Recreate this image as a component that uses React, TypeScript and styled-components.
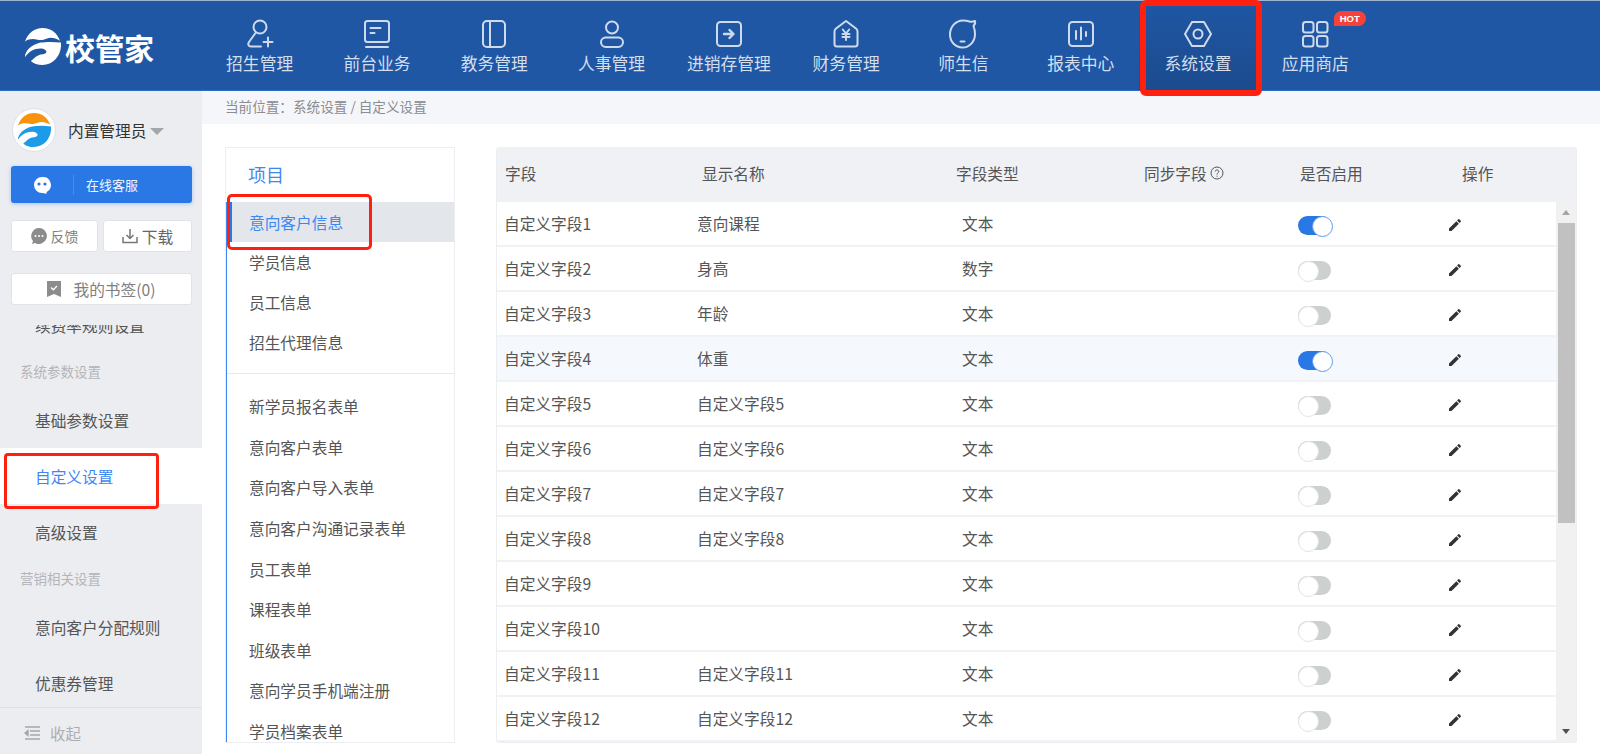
import React from "react";
import styled, { createGlobalStyle } from "styled-components";

const GlobalStyle = createGlobalStyle`
  html, body {
    margin: 0;
    padding: 0;
    background: #fff;
    font-family: "Noto Sans CJK SC", "Noto Sans", "Liberation Sans", sans-serif;
  }
  * { box-sizing: border-box; }
`;

const Page = styled.div`
  width: 1600px;
  height: 754px;
  display: flex;
  flex-direction: column;
  overflow: hidden;
`;

/* top bar */
const Header = styled.header`
  height: 91px;
  flex: none;
  display: flex;
  background: #1f57a4;
  border-top: 1px solid #9fb4d3;
  border-bottom: 1px solid #2f6cc0;
`;

const Brand = styled.div`
  width: 201px;
  display: flex;
  align-items: center;
  gap: 4px;
  padding: 2px 0 0 24px;
  color: #fff;
  font-size: 30px;
  font-weight: 700;
  letter-spacing: -0.5px;
`;

const Nav = styled.nav`
  display: flex;
`;

const NavItem = styled.div<{ $active?: boolean }>`
  position: relative;
  width: 117.3px;
  display: flex;
  flex-direction: column;
  align-items: center;
  padding-top: 17px;
  color: #d3deee;
  font-size: 16.8px;
  line-height: 24px;
  gap: 1px;
  background: ${({ $active }) =>
    $active ? "linear-gradient(#1f57a4, #1c4b8e)" : "transparent"};
  svg {
    width: 32px;
    height: 32px;
    fill: none;
    stroke: #cfdbec;
    stroke-width: 2;
    stroke-linecap: round;
    stroke-linejoin: round;
  }
`;

const NavMark = styled.span`
  position: absolute;
  top: -1px;
  left: 1px;
  right: -5px;
  height: 96px;
  border: 6px solid #ff2010;
  border-radius: 6px;
  z-index: 3;
`;

const HotBadge = styled.span`
  position: absolute;
  top: 10px;
  left: 77px;
  width: 32px;
  height: 15px;
  border-radius: 8px 8px 8px 0;
  background: #f5423a;
  color: #fff;
  font-size: 9.5px;
  line-height: 15px;
  font-weight: 700;
  text-align: center;
  font-family: "Liberation Sans", sans-serif;
`;

/* layout below the bar */
const Body = styled.div`
  flex: 1;
  min-height: 0;
  display: flex;
`;

const Sidebar = styled.aside`
  width: 202px;
  flex: none;
  display: flex;
  flex-direction: column;
  background: #ecedf1;
`;

const UserRow = styled.div`
  display: flex;
  align-items: center;
  padding: 17px 0 0 12px;
  height: 61px;
  font-size: 15.7px;
  color: #333;
`;

const Avatar = styled.div`
  width: 44px;
  height: 44px;
  flex: none;
  margin-right: 12px;
  border-radius: 50%;
  border: 1px solid #dfe0e3;
  background: #fff;
  display: flex;
  align-items: center;
  justify-content: center;
`;

const Caret = styled.span`
  width: 0;
  height: 0;
  margin: 3px 0 0 4px;
  border-left: 7px solid transparent;
  border-right: 7px solid transparent;
  border-top: 7px solid #a4a6aa;
`;

const ServiceButton = styled.div`
  margin: 14px 10px 0 11px;
  height: 37px;
  flex: none;
  display: flex;
  align-items: center;
  border-radius: 3px;
  background: #2a77e6;
  box-shadow: 0 1px 4px rgba(42, 119, 230, 0.35);
  color: #f2f7ff;
  font-size: 13px;
`;

const ServiceIcon = styled.span`
  width: 63px;
  height: 20px;
  display: flex;
  align-items: center;
  justify-content: center;
  border-right: 1px solid #4a8cec;
  margin-right: 12px;
`;

const ButtonRow = styled.div`
  display: flex;
  flex: none;
  gap: 5px;
  margin: 17px 10px 0 11px;
`;

const WhiteButton = styled.div<{ $grow?: number; $size?: number; $tone?: string }>`
  flex: ${({ $grow }) => $grow ?? 1};
  height: 32px;
  display: flex;
  align-items: center;
  justify-content: center;
  gap: 4px;
  background: #fff;
  border: 1px solid #e1e3e8;
  border-radius: 3px;
  font-size: ${({ $size }) => $size ?? 14}px;
  color: ${({ $tone }) => $tone ?? "#808080"};
`;

const BookmarkRow = styled(ButtonRow)`
  margin-top: 21px;
  ${WhiteButton} {
    gap: 12px;
  }
`;

const Menu = styled.div`
  flex: 1;
  min-height: 0;
  margin-top: 20px;
  overflow: hidden;
`;

const MenuInner = styled.div`
  margin-top: -28px;
`;

const MenuItem = styled.div<{ $active?: boolean }>`
  position: relative;
  height: 56px;
  display: flex;
  align-items: center;
  padding-left: 35px;
  font-size: 15.7px;
  color: ${({ $active }) => ($active ? "#3f87f0" : "#555")};
  background: ${({ $active }) => ($active ? "#fff" : "transparent")};
`;

const MenuGroup = styled.div<{ $height: number }>`
  height: ${({ $height }) => $height}px;
  display: flex;
  align-items: center;
  padding: 0 0 4px 20px;
  font-size: 13.5px;
  color: #b4b5b8;
`;

const SideMark = styled.span`
  position: absolute;
  top: 5px;
  left: 4px;
  width: 155px;
  height: 56px;
  border: 3px solid #ff2010;
  border-radius: 4px;
`;

const Collapse = styled.div`
  height: 47px;
  flex: none;
  display: flex;
  align-items: center;
  gap: 10px;
  padding: 4px 0 0 24px;
  border-top: 1px solid #dfe1e6;
  color: #adaeb2;
  font-size: 15.4px;
`;

const Main = styled.main`
  flex: 1;
  min-width: 0;
  display: flex;
  flex-direction: column;
`;

const Crumbs = styled.div`
  height: 33px;
  flex: none;
  display: flex;
  align-items: center;
  padding: 0 0 3px 23px;
  background: #f5f6fa;
  color: #8b8d92;
  font-size: 13.6px;
`;

const Content = styled.div`
  flex: 1;
  min-height: 0;
  display: flex;
  gap: 41px;
  padding: 23px 23px 11px 23px;
`;

/* field type list */
const ListPanel = styled.section`
  width: 230px;
  flex: none;
  display: flex;
  flex-direction: column;
  border: 1px solid #eceef2;
  overflow: hidden;
`;

const ListTitle = styled.div`
  height: 54px;
  flex: none;
  display: flex;
  align-items: center;
  padding: 0 0 3px 22px;
  color: #3f87f0;
  font-size: 18px;
`;

const ListBody = styled.div`
  flex: 1;
  min-height: 0;
  border-left: 2px solid #3f87f0;
  margin-left: -1px;
`;

const ListItem = styled.div<{ $active?: boolean }>`
  position: relative;
  height: 40.6px;
  display: flex;
  align-items: center;
  padding-left: 22px;
  font-size: 15.7px;
  white-space: nowrap;
  color: ${({ $active }) => ($active ? "#3f87f0" : "#555")};
  background: ${({ $active }) => ($active ? "#e3e6ea" : "transparent")};
  &::before {
    content: "";
    display: ${({ $active }) => ($active ? "block" : "none")};
    position: absolute;
    left: 0;
    top: 0;
    bottom: 0;
    width: 5px;
    background: #2a77e6;
  }
`;

const FirstGroup = styled.div`
  ${ListItem} {
    height: 40px;
  }
`;

const ListMark = styled.span`
  position: absolute;
  top: -8px;
  left: 0;
  width: 145px;
  height: 56px;
  border: 3px solid #ff2010;
  border-radius: 5px;
  z-index: 2;
`;

const ListDivider = styled.div`
  height: 1px;
  margin: 11px 0 12.4px;
  background: #e8e9ed;
`;

/* fields table */
const TablePanel = styled.section`
  flex: 1;
  min-width: 0;
  display: flex;
  flex-direction: column;
  border: 1px solid #eceef2;
  border-top: 0;
  border-radius: 3px;
  overflow: hidden;
`;

const COLUMNS = "193px 257px 187px 150px 150px 1fr";

const TableHead = styled.div`
  height: 55px;
  flex: none;
  display: grid;
  grid-template-columns: ${COLUMNS};
  align-items: center;
  padding-bottom: 3px;
  background: #f0f1f5;
  color: #555;
  font-size: 15.7px;
`;

const HeadCell = styled.div<{ $pad: number }>`
  display: flex;
  align-items: center;
  gap: 3px;
  padding-left: ${({ $pad }) => $pad}px;
`;

const TableBody = styled.div`
  flex: 1;
  min-height: 0;
  display: flex;
`;

const Rows = styled.div`
  flex: 1;
  min-width: 0;
`;

const Row = styled.div<{ $hover?: boolean }>`
  height: 45px;
  display: grid;
  grid-template-columns: ${COLUMNS};
  align-items: center;
  border-bottom: 2px solid #f1f2f6;
  color: #555;
  font-size: 15.7px;
  background: ${({ $hover }) => ($hover ? "#f5f9fe" : "#fff")};
`;

const Cell = styled.div<{ $pad: number }>`
  display: flex;
  align-items: center;
  padding-left: ${({ $pad }) => $pad}px;
`;

const Switch = styled.span<{ $on: boolean }>`
  position: relative;
  width: 33px;
  height: 19px;
  margin-top: 3px;
  border-radius: 10px;
  background: ${({ $on }) => ($on ? "#2a77e6" : "#ccd0ce")};
  &::after {
    content: "";
    position: absolute;
    top: 0;
    left: ${({ $on }) => ($on ? "14px" : "0")};
    width: 19px;
    height: 19px;
    border-radius: 50%;
    background: #fff;
    border: 1px solid ${({ $on }) => ($on ? "#5f9bf0" : "#e2e4e3")};
  }
`;

const PencilIcon = styled.svg`
  width: 16px;
  height: 16px;
  margin-top: 3px;
  fill: #333;
`;

const ScrollBar = styled.div`
  width: 20px;
  flex: none;
  display: flex;
  flex-direction: column;
  align-items: center;
  background: #f1f1f1;
`;

const ScrollArrow = styled.div<{ $up?: boolean }>`
  height: 21px;
  flex: none;
  width: 100%;
  display: flex;
  align-items: center;
  justify-content: center;
  &::after {
    content: "";
    border-left: 4.5px solid transparent;
    border-right: 4.5px solid transparent;
    ${({ $up }) =>
      $up
        ? "border-bottom: 5px solid #a3a3a3;"
        : "border-top: 5px solid #505050;"}
  }
`;

const ScrollThumb = styled.div`
  width: 17px;
  height: 300px;
  flex: none;
  background: #c1c1c1;
`;

const ScrollTrack = styled.div`
  flex: 1;
`;

const Swoosh = ({ top, bottom, size }: { top: string; bottom: string; size: number }) => (
  <svg width={size} height={size} viewBox="0 0 38 38">
    <path
      fill={top}
      d="M1 14C4 5 11 0 19 0c9 0 15 5 18 13-5-3-10-4-14-2-3 1-5 2-9 1-5-1-9-1-13 2z"
    />
    <path
      fill={bottom}
      d="M38 15c1 12-7 23-19 23-5 0-9-1-12-4 4-3 7-7 12-7 1 0 2 0 3-1 3-2-1-5-5-5-7 0-12 3-16 9 0-7 7-13 16-15 6-1 14-1 21 0z"
    />
  </svg>
);

const navIcons: Record<string, React.ReactNode> = {
  招生管理: (
    <svg viewBox="0 0 32 32">
      <circle cx="16" cy="9" r="6.5" />
      <path d="M11.5 15 5 24c-1.500 2.500-.5 4.500 2 4.500h10" />
      <path d="M24 19.500v9M19.500 24h9" />
    </svg>
  ),
  前台业务: (
    <svg viewBox="0 0 32 32">
      <rect x="4" y="3" width="24" height="21" rx="2.500" />
      <path d="M9.500 10h10M9.500 15h4M5 29h22" />
    </svg>
  ),
  教务管理: (
    <svg viewBox="0 0 32 32">
      <rect x="5" y="3" width="22" height="26" rx="4" />
      <path d="M12 3v26" />
    </svg>
  ),
  人事管理: (
    <svg viewBox="0 0 32 32">
      <circle cx="16" cy="9.500" r="6" />
      <rect x="5" y="19.500" width="22" height="9.500" rx="4.700" />
    </svg>
  ),
  进销存管理: (
    <svg viewBox="0 0 32 32">
      <rect x="4" y="4" width="24" height="24" rx="3.500" />
      <path d="M11 16h9M16.500 12l4 4-4 4" strokeWidth="2.400" />
    </svg>
  ),
  财务管理: (
    <svg viewBox="0 0 32 32">
      <path d="M16 3 6 10.500c-1 .8-1.500 1.500-1.500 3V26c0 1.500 1 2.500 2.500 2.500h18c1.500 0 2.500-1 2.500-2.500V13.500c0-1.500-.5-2.200-1.500-3z" />
      <path d="m12.800 11.500 3.200 4 3.200-4M12.500 16h7M12.500 19h7M16 15.500V22" />
    </svg>
  ),
  师生信: (
    <svg viewBox="0 0 32 32">
      <path d="M26.500 8c1.500-1.500 2-3 1.500-5-2 .8-3.500 1-5.500.5C21 3 18.500 2.500 16 2.500 8.500 2.500 3 9 3 16.500s5.500 13 12.500 13S28 23.500 28 16c0-3-.5-5.500-1.500-8z" />
      <path d="M13.500 23.500h4" />
    </svg>
  ),
  报表中心: (
    <svg viewBox="0 0 32 32">
      <rect x="4" y="4" width="24" height="24" rx="3.500" />
      <path d="M11 13v8M16 9.500v12M21 14v4" />
    </svg>
  ),
  系统设置: (
    <svg viewBox="0 0 32 32">
      <path d="M10 4h12l7 12-7 12H10L3 16z" />
      <circle cx="16" cy="16" r="4.500" />
    </svg>
  ),
  应用商店: (
    <svg viewBox="0 0 32 32">
      <rect x="4" y="4" width="10.500" height="10.500" rx="2.500" />
      <rect x="18" y="4" width="10.500" height="10.500" rx="2.500" />
      <rect x="4" y="18" width="10.500" height="10.500" rx="2.500" />
      <rect x="18" y="18" width="10.500" height="10.500" rx="2.500" />
    </svg>
  ),
};

const navNames = Object.keys(navIcons);

const firstList = ["学员信息", "员工信息", "招生代理信息"];
const secondList = [
  "新学员报名表单",
  "意向客户表单",
  "意向客户导入表单",
  "意向客户沟通记录表单",
  "员工表单",
  "课程表单",
  "班级表单",
  "意向学员手机端注册",
  "学员档案表单",
];

const fields = [
  { name: "自定义字段1", label: "意向课程", type: "文本", on: true },
  { name: "自定义字段2", label: "身高", type: "数字", on: false },
  { name: "自定义字段3", label: "年龄", type: "文本", on: false },
  { name: "自定义字段4", label: "体重", type: "文本", on: true, hover: true },
  { name: "自定义字段5", label: "自定义字段5", type: "文本", on: false },
  { name: "自定义字段6", label: "自定义字段6", type: "文本", on: false },
  { name: "自定义字段7", label: "自定义字段7", type: "文本", on: false },
  { name: "自定义字段8", label: "自定义字段8", type: "文本", on: false },
  { name: "自定义字段9", label: "", type: "文本", on: false },
  { name: "自定义字段10", label: "", type: "文本", on: false },
  { name: "自定义字段11", label: "自定义字段11", type: "文本", on: false },
  { name: "自定义字段12", label: "自定义字段12", type: "文本", on: false },
];

const Pencil = () => (
  <PencilIcon viewBox="0 0 24 24">
    <path d="M3 17.250V21h3.750L17.810 9.940l-3.750-3.750L3 17.250zM20.710 7.040c.39-.39.39-1.020 0-1.410l-2.340-2.340c-.39-.39-1.020-.39-1.410 0l-1.830 1.830 3.750 3.750 1.830-1.830z" />
  </PencilIcon>
);

export default function App() {
  return (
    <Page>
      <GlobalStyle />
      <Header>
        <Brand>
          <Swoosh top="#fff" bottom="#fff" size={37} />
          校管家
        </Brand>
        <Nav>
          {navNames.map((name) => (
            <NavItem key={name} $active={name === "系统设置"}>
              {navIcons[name]}
              {name}
              {name === "系统设置" && <NavMark />}
              {name === "应用商店" && <HotBadge>HOT</HotBadge>}
            </NavItem>
          ))}
        </Nav>
      </Header>
      <Body>
        <Sidebar>
          <UserRow>
            <Avatar>
              <Swoosh top="#f7930e" bottom="#1e9be8" size={34} />
            </Avatar>
            内置管理员
            <Caret />
          </UserRow>
          <ServiceButton>
            <ServiceIcon>
              <svg width="18" height="18" viewBox="0 0 18 18">
                <path
                  fill="#fff"
                  d="M9 1a8 8 0 0 0-8 8 8 8 0 0 0 8 8c1.500 0 3 .5 4.500 1-.3-1 0-1.600.5-2.200A8 8 0 0 0 9 1z"
                />
                <circle cx="6" cy="8" r="1.600" fill="#2a77e6" />
                <circle cx="12" cy="8" r="1.600" fill="#2a77e6" />
              </svg>
            </ServiceIcon>
            在线客服
          </ServiceButton>
          <ButtonRow>
            <WhiteButton $grow={86}>
              <svg width="16" height="16" viewBox="0 0 16 16">
                <path
                  fill="#8c8c8c"
                  d="M8 0a8 8 0 1 1-4 15L1 16l1-3A8 8 0 0 1 8 0z"
                />
                <circle cx="4.500" cy="8" r="1" fill="#fff" />
                <circle cx="8" cy="8" r="1" fill="#fff" />
                <circle cx="11.500" cy="8" r="1" fill="#fff" />
              </svg>
              反馈
            </WhiteButton>
            <WhiteButton $grow={88} $size={15.7} $tone="#666">
              <svg
                width="16"
                height="16"
                viewBox="0 0 16 16"
                fill="none"
                stroke="#777"
                strokeWidth="1.500"
              >
                <path d="M1 9v5.500h14V9M8 1v9M4.500 7 8 10.500 11.500 7" />
              </svg>
              下载
            </WhiteButton>
          </ButtonRow>
          <BookmarkRow>
            <WhiteButton $size={15.7}>
              <svg width="14" height="16" viewBox="0 0 14 16">
                <path fill="#8c8c8c" d="M0 0h14v16l-7-3-7 3z" />
                <path
                  d="m4 6.500 2.300 2.300L10 5"
                  fill="none"
                  stroke="#fff"
                  strokeWidth="1.300"
                />
              </svg>
              我的书签(0)
            </WhiteButton>
          </BookmarkRow>
          <Menu>
            <MenuInner>
              <MenuItem>续费率规则设置</MenuItem>
              <MenuGroup $height={39}>系统参数设置</MenuGroup>
              <MenuItem>基础参数设置</MenuItem>
              <MenuItem $active>
                自定义设置
                <SideMark />
              </MenuItem>
              <MenuItem>高级设置</MenuItem>
              <MenuGroup $height={39}>营销相关设置</MenuGroup>
              <MenuItem>意向客户分配规则</MenuItem>
              <MenuItem>优惠券管理</MenuItem>
            </MenuInner>
          </Menu>
          <Collapse>
            <svg
              width="16"
              height="14"
              viewBox="0 0 16 14"
              fill="none"
              stroke="#a5a6aa"
              strokeWidth="1.300"
            >
              <path d="M1 1h15M6 5h10M6 9h10M1 13h15" />
              <path d="M4 4.500 1 7l3 2.500z" fill="#a5a6aa" />
            </svg>
            收起
          </Collapse>
        </Sidebar>
        <Main>
          <Crumbs>当前位置：系统设置 / 自定义设置</Crumbs>
          <Content>
            <ListPanel>
              <ListTitle>项目</ListTitle>
              <ListBody>
                <FirstGroup>
                  <ListItem $active>
                    意向客户信息
                    <ListMark />
                  </ListItem>
                  {firstList.map((item) => (
                    <ListItem key={item}>{item}</ListItem>
                  ))}
                </FirstGroup>
                <ListDivider />
                {secondList.map((item) => (
                  <ListItem key={item}>{item}</ListItem>
                ))}
              </ListBody>
            </ListPanel>
            <TablePanel>
              <TableHead>
                <HeadCell $pad={8}>字段</HeadCell>
                <HeadCell $pad={12}>显示名称</HeadCell>
                <HeadCell $pad={9}>字段类型</HeadCell>
                <HeadCell $pad={10}>
                  同步字段
                  <svg
                    width="14"
                    height="14"
                    viewBox="0 0 14 14"
                    fill="none"
                    stroke="#555"
                    strokeWidth="1"
                  >
                    <circle cx="7" cy="7" r="6" />
                    <path d="M5.200 5.500C5.200 3.500 8.800 3.500 8.800 5.500 8.800 7 7 6.800 7 8.500M7 9.700v1" />
                  </svg>
                </HeadCell>
                <HeadCell $pad={16}>是否启用</HeadCell>
                <HeadCell $pad={28}>操作</HeadCell>
              </TableHead>
              <TableBody>
                <Rows>
                  {fields.map((f) => (
                    <Row key={f.name} $hover={f.hover}>
                      <Cell $pad={7}>{f.name}</Cell>
                      <Cell $pad={7}>{f.label}</Cell>
                      <Cell $pad={15}>{f.type}</Cell>
                      <Cell $pad={0} />
                      <Cell $pad={14}>
                        <Switch $on={f.on} />
                      </Cell>
                      <Cell $pad={13}>
                        <Pencil />
                      </Cell>
                    </Row>
                  ))}
                </Rows>
                <ScrollBar>
                  <ScrollArrow $up />
                  <ScrollThumb />
                  <ScrollTrack />
                  <ScrollArrow />
                </ScrollBar>
              </TableBody>
            </TablePanel>
          </Content>
        </Main>
      </Body>
    </Page>
  );
}
